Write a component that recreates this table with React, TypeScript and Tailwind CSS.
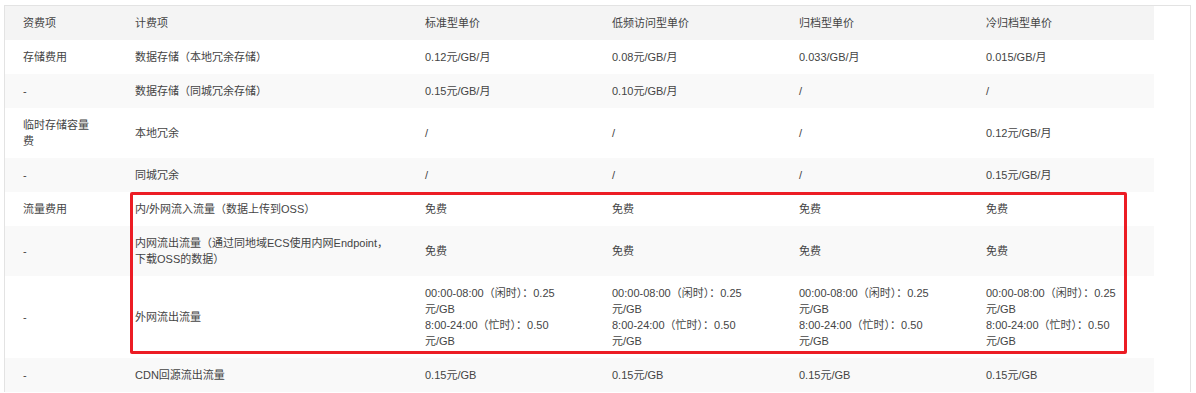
const FREE = '免费';

type Row = {
  group: string;
  item: string;
  prices: string[];
};

const PEAK = '00:00-08:00（闲时）：0.25元/GB\n8:00-24:00（忙时）：0.50元/GB';

const ROWS: Row[] = [
  { group: '存储费用', item: '数据存储（本地冗余存储）', prices: ['0.12元/GB/月', '0.08元/GB/月', '0.033/GB/月', '0.015/GB/月'] },
  { group: '-', item: '数据存储（同城冗余存储）', prices: ['0.15元/GB/月', '0.10元/GB/月', '/', '/'] },
  { group: '临时存储容量费', item: '本地冗余', prices: ['/', '/', '/', '0.12元/GB/月'] },
  { group: '-', item: '同城冗余', prices: ['/', '/', '/', '0.15元/GB/月'] },
  { group: '流量费用', item: '内/外网流入流量（数据上传到OSS）', prices: [FREE, FREE, FREE, FREE] },
  { group: '-', item: '内网流出流量（通过同地域ECS使用内网Endpoint，下载OSS的数据）', prices: [FREE, FREE, FREE, FREE] },
  { group: '-', item: '外网流出流量', prices: [PEAK, PEAK, PEAK, PEAK] },
  { group: '-', item: 'CDN回源流出流量', prices: ['0.15元/GB', '0.15元/GB', '0.15元/GB', '0.15元/GB'] },
];

const HEAD = ['资费项', '计费项', '标准型单价', '低频访问型单价', '归档型单价', '冷归档型单价'];

function PriceText({ text }: { text: string }) {
  const lines = text.split('\n');
  return (
    <>
      {lines.map((l) => (
        <div key={l}>{l}</div>
      ))}
    </>
  );
}

export default function App() {
  return (
    <div
      className="relative h-[393px] w-[1196px] overflow-hidden bg-white text-[11px] leading-4 text-[#444]"
      style={{ fontFamily: '"Liberation Sans", "Noto Sans CJK SC", sans-serif' }}
    >
      <div className="ml-[4px] mt-[5px] w-[1187px] border-l border-r border-t border-[#e3e3e3]">
        <table className="w-[1149px] table-fixed border-collapse">
          <colgroup>
            <col className="w-[112px]" />
            <col className="w-[290px]" />
            <col className="w-[187px]" />
            <col className="w-[187px]" />
            <col className="w-[187px]" />
            <col className="w-[186px]" />
          </colgroup>
          <thead>
            <tr className="bg-[#f4f4f4]">
              {HEAD.map((h) => (
                <th key={h} className="py-[9px] pl-[18px] pr-[20px] text-left align-middle font-normal">
                  {h}
                </th>
              ))}
            </tr>
          </thead>
          <tbody>
            {ROWS.map((r, i) => (
              <tr key={i} className={i % 2 === 0 ? 'bg-white' : 'bg-[#f9f9f9]'}>
                <td className="py-[9px] pl-[18px] pr-[20px] align-middle">{r.group}</td>
                <td className="py-[9px] pl-[18px] pr-[14px] align-middle">{r.item}</td>
                {r.prices.map((p, j) => (
                  <td key={j} className="py-[9px] pl-[18px] pr-[22px] align-middle">
                    <PriceText text={p} />
                  </td>
                ))}
              </tr>
            ))}
          </tbody>
        </table>
      </div>
      <div className="pointer-events-none absolute left-[130px] top-[192px] h-[162px] w-[997px] rounded-[2px] border-[3px] border-[#ec1c24]" />
    </div>
  );
}
